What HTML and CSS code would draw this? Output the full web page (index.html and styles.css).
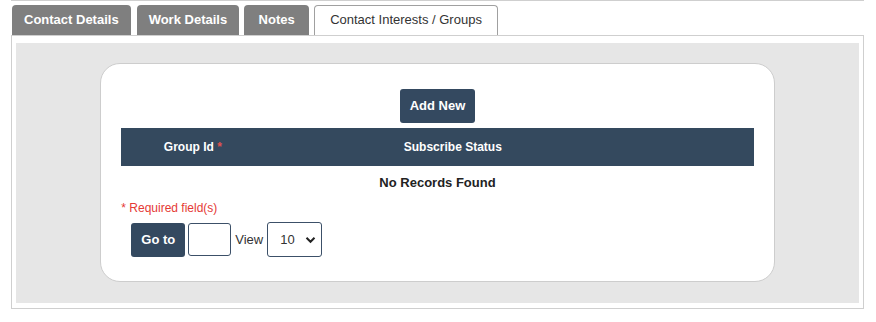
FILE: index.html
```html
<!DOCTYPE html>
<html lang="en-us">
  <head>
    <meta charset="utf-8">
    <title>Contact Interests / Groups</title>
    <link rel="stylesheet" href="styles.css">
  </head>
  <body>
    <div class="wrap">
      <div class="tabs">
        <div class="tab">Contact Details</div>
        <div class="tab">Work Details</div>
        <div class="tab">Notes</div>
        <div class="tab active">Contact Interests / Groups</div>
      </div>
      <div class="panel">
        <div class="area">
          <div class="card">
            <div class="toolbar">
              <div class="btn">Add New</div>
            </div>
            <div class="grid-head">
              <div class="col">Group Id <span class="req">*</span></div>
              <div class="col">Subscribe Status</div>
              <div class="col"></div>
            </div>
            <div class="empty">No Records Found</div>
            <div class="required">* Required field(s)</div>
            <div class="pager">
              <div class="btn goto">Go to</div>
              <div class="pagebox"></div>
              <span class="view">View</span>
              <div class="select">10
                <svg width="11" height="8" viewBox="0 0 11 8"><path d="M1.5 1.8 L5.5 5.8 L9.5 1.8" fill="none" stroke="#222" stroke-width="2"/></svg>
              </div>
            </div>
          </div>
        </div>
      </div>
    </div>
  </body>
</html>
```

FILE: styles.css
```css
* {
    margin: 0;
    padding: 0;
    box-sizing: border-box;
}
body {
    background: #fff;
    font-family: "Liberation Sans", Arial, sans-serif;
    font-size: 13px;
    color: #222;
}
.wrap {
    margin-left: 11px;
    width: 853px;
    border-top: 1px solid #cfcfcf;
}
.tabs {
    display: flex;
    padding: 4px 0 0 1px;
}
.tab {
    height: 30px;
    line-height: 30px;
    min-width: 65px;
    text-align: center;
    padding: 0 12px;
    margin-right: 5px;
    background: #7f7f7f;
    color: #fff;
    font-weight: bold;
    border-radius: 4px 4px 0 0;
}
.tab:first-child {
    margin-right: 6px;
}
.tab.active {
    background: #fff;
    color: #333;
    font-weight: normal;
    padding: 0 15px;
    border: 1px solid #a0a0a0;
    border-bottom: none;
    line-height: 28px;
}
.panel {
    border: 1px solid #cfcfcf;
    padding: 7px 4px 5px 4px;
}
.area {
    background: #e6e6e6;
    padding: 20px 0 21px;
}
.card {
    width: 80%;
    margin: 0 auto;
    background: #fff;
    border: 1px solid #cdcdcd;
    border-radius: 20px;
    padding: 25px 20px 24px;
}
.toolbar {
    display: flex;
    justify-content: center;
    margin-bottom: 5px;
}
.btn {
    background: #344960;
    color: #fff;
    font-weight: bold;
    height: 34px;
    line-height: 34px;
    padding: 0 10px;
    border-radius: 3px;
}
.grid-head {
    display: grid;
    grid-template-columns: 143px 377px 1fr;
    height: 38px;
    line-height: 38px;
    background: #34495e;
    color: #fff;
    font-weight: bold;
    font-size: 12px;
    text-align: center;
}
.req {
    color: #e0524f;
}
.empty {
    text-align: center;
    font-weight: bold;
    height: 34px;
    line-height: 34px;
}
.required {
    color: #e53935;
    font-size: 12px;
    line-height: 14px;
    margin: 1px 0 7px;
}
.pager {
    display: flex;
    align-items: center;
    padding-left: 10px;
}
.goto {
    padding: 0 10px;
}
.pagebox {
    width: 43px;
    height: 33px;
    border: 1px solid #3c5068;
    border-radius: 3px;
    margin-left: 3px;
}
.view {
    margin: 0 4px;
    color: #333;
}
.select {
    width: 55px;
    height: 35px;
    border: 1px solid #3c5068;
    border-radius: 3px;
    display: flex;
    align-items: center;
    justify-content: space-between;
    padding: 0 5px 0 12px;
    color: #333;
}
```
